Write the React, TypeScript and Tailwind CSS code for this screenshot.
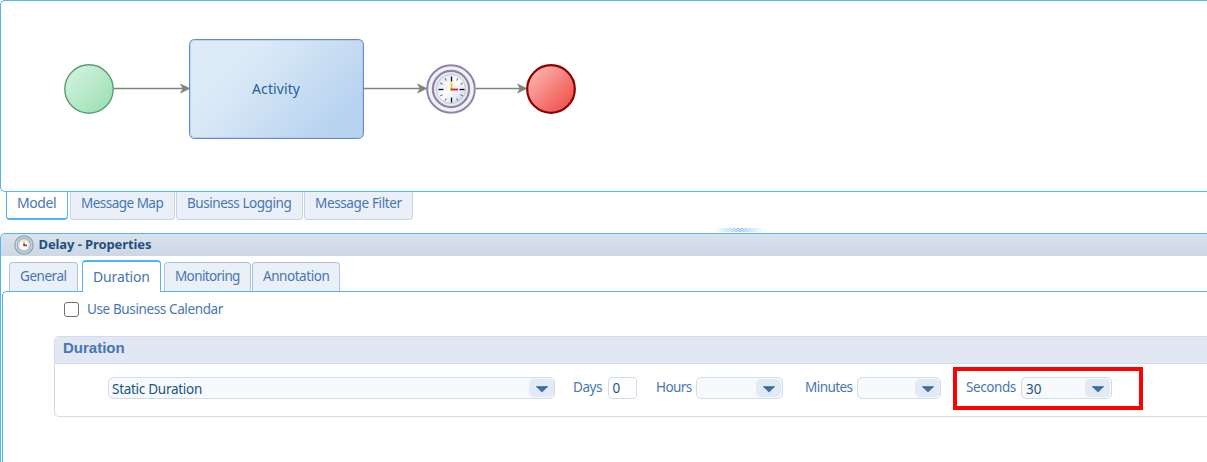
import React from "react";

function Clock() {
  const ticks = Array.from({ length: 12 }, (_, i) => i * 30);
  return (
    <g transform="translate(451 89)">
      <circle r="23.8" fill="#f1f0f3" stroke="#8d85ac" strokeWidth="2" />
      <circle r="18.1" fill="#e9e8ef" stroke="#8d85ac" strokeWidth="2.2" />
      <circle r="14.6" fill="url(#clockFace)" stroke="#b5ccd8" strokeWidth="1" />
      {ticks.map((a) => (
        <line
          key={a}
          y1={-13}
          y2={a % 90 === 0 ? -8 : -10.3}
          stroke={a % 90 === 0 ? "#111" : "#66727c"}
          strokeWidth={a % 90 === 0 ? 1.3 : 1}
          transform={`translate(0.5 0.5) rotate(${a})`}
        />
      ))}
      <path d="M0.5 1V-6.5" stroke="#f6c400" strokeWidth="1.8" />
      <path d="M0 0.5H7" stroke="#f01818" strokeWidth="1.8" />
      <rect x="-0.5" y="-0.5" width="2" height="2" fill="#b46a10" />
    </g>
  );
}

function Arrow({ from, to }: { from: number; to: number }) {
  return (
    <g>
      <path d={`M${from} 88.5H${to - 3}`} stroke="#7d8678" strokeWidth="1.3" />
      <path d={`M${to} 88.5L${to - 9.5} 84L${to - 7} 88.5L${to - 9.5} 93Z`} fill="#7d8678" stroke="#7d8678" strokeWidth="0.6" />
    </g>
  );
}

function Diagram() {
  return (
    <svg className="block" width="1206" height="190" viewBox="1 1 1206 190">
      <defs>
        <linearGradient id="start" x1="0" y1="0" x2="1" y2="1">
          <stop offset="0.1" stopColor="#d3f1de" />
          <stop offset="0.9" stopColor="#9de0b4" />
        </linearGradient>
        <linearGradient id="end" x1="0" y1="0" x2="1" y2="1">
          <stop offset="0.1" stopColor="#fbb4b0" />
          <stop offset="0.9" stopColor="#f0504a" />
        </linearGradient>
        <linearGradient id="activity" gradientUnits="userSpaceOnUse" x1="210" y1="30" x2="325" y2="135">
          <stop offset="0" stopColor="#deeaf7" />
          <stop offset="0.3" stopColor="#dceaf7" />
          <stop offset="1" stopColor="#b8d3f0" />
        </linearGradient>
        <linearGradient id="clockFace" x1="0" y1="0" x2="1" y2="1">
          <stop offset="0.1" stopColor="#d9e4f2" />
          <stop offset="0.5" stopColor="#fff" />
          <stop offset="1" stopColor="#c3d0e8" />
        </linearGradient>
      </defs>
      <Arrow from={114} to={190} />
      <Arrow from={364} to={427} />
      <Arrow from={476} to={527} />
      <circle cx="89" cy="89" r="24.2" fill="url(#start)" stroke="#579e78" strokeWidth="1.4" />
      <rect x="189.5" y="39.5" width="174" height="99" rx="5" fill="url(#activity)" stroke="#6688c8" />
      <rect x="190.5" y="40.5" width="172" height="97" rx="4" fill="none" stroke="#a9c3e8" strokeOpacity="0.6" />
      <text x="252" y="94" textLength="48" className="font-['Noto_Sans',sans-serif] text-[14px]" fill="#1f5fa0">
        Activity
      </text>
      <Clock />
      <circle cx="551" cy="89" r="23.8" fill="url(#end)" stroke="#8c0000" strokeWidth="2.2" />
    </svg>
  );
}

function SelectBox({ value = "", className }: { value?: string; className: string }) {
  return (
    <div className={`flex h-[22px] items-center justify-between rounded-[5px] border border-[#cfdceb] bg-[#f7f9fc] text-[#185684] ${className}`}>
      <span className="relative top-px whitespace-nowrap leading-[20px]">{value}</span>
      <span className="flex h-[18px] w-[25px] items-center justify-center rounded-[5px] bg-[#e2ebf5]">
        <svg width="12" height="7" viewBox="0 0 12 7" className="relative top-px">
          <path d="M0 0.5H12L6 6.5Z" fill="#3b72ab" />
          <path d="M0 0.5H12L11 1.5H1Z" fill="#285b91" />
        </svg>
      </span>
    </div>
  );
}

function HeaderClock() {
  return (
    <svg width="20" height="20" viewBox="0 0 20 20" className="ml-[13px] shrink-0">
      <circle cx="10" cy="10" r="9.2" fill="#cbd6df" stroke="#8ea5b8" strokeWidth="1.3" />
      <circle cx="10" cy="10" r="6.6" fill="#dfe5ea" stroke="#a4b3c0" strokeWidth="1.3" />
      <circle cx="10" cy="10" r="4.7" fill="#fff" stroke="#d5dde4" strokeWidth="0.7" />
      <path d="M10 6.5V10" stroke="#d59b22" strokeWidth="1.3" />
      <path d="M9.3 10.4H13" stroke="#e01818" strokeWidth="1.6" />
      <path d="M9.5 9.7H10.7" stroke="#513010" strokeWidth="1.3" />
    </svg>
  );
}

function SplitterGrip() {
  return (
    <svg width="50" height="4" viewBox="0 0 50 4" className="ml-[715px] block">
      {Array.from({ length: 48 }, (_, i) => {
        const level = 1 - Math.abs(i - 24) / 25;
        return [0, 1, 2, 3].map((r) => (
          <rect key={`${i}-${r}`} x={i} y={r} width="1" height="1" fill="#87b9f4" fillOpacity={level * ((Math.floor(i / 2) + r) % 2 ? 0.85 : 0.4)} />
        ));
      })}
    </svg>
  );
}

const modelTab = "h-7 rounded-b-[4px] border border-t-0 border-[#c5d5e8] bg-[#ebf0f8] pl-[10px] pt-px leading-[20px]";
const propertyTab = "h-[29px] rounded-t-[4px] border border-b-0 border-[#b0c4de] bg-[#ebf0f8] pl-[10px] pt-[3px] leading-[20px]";

export default function App() {
  return (
    <div className="flex h-[462px] w-[1207px] flex-col overflow-hidden bg-white font-['Noto_Sans',sans-serif] text-[13.5px] text-[#4676b4]">
      <section className="h-48 shrink-0 rounded-l-[5px] border border-r-0 border-[#54b6ee]">
        <Diagram />
      </section>

      <nav className="flex h-[36px] shrink-0 whitespace-nowrap pl-[6px]">
        <div className="mr-[2px] h-7 w-[62px] rounded-b-[4px] border border-t-0 border-b-2 border-[#4db5f3] pl-[10px] text-[14px] leading-[21px] tracking-[-0.4px]">Model</div>
        <div className={`${modelTab} mr-px w-[105px] tracking-[-0.52px]`}>Message Map</div>
        <div className={`${modelTab} mr-px w-[127px] tracking-[-0.45px]`}>Business Logging</div>
        <div className={`${modelTab} w-[109px] tracking-[-0.36px]`}>Message Filter</div>
      </nav>
      <div className="h-[5px] shrink-0">
        <SplitterGrip />
      </div>

      <section className="flex flex-1 flex-col rounded-tl-[5px] border-t border-l border-[#54b6ee]">
        <header className="flex h-[22px] shrink-0 items-center rounded-tl-[4px] bg-linear-to-b from-[#d9e3ee] to-[#ced8e4] text-[13px] font-bold text-[#1f5080]">
          <HeaderClock />
          <span className="ml-[4.5px] whitespace-nowrap tracking-[-0.1px]">Delay - Properties</span>
        </header>

        <nav className="z-10 flex h-[36px] shrink-0 items-end whitespace-nowrap pl-2">
          <div className={`${propertyTab} mr-1 mb-px w-[69px] tracking-[-0.45px]`}>General</div>
          <div className="h-8 w-[79px] rounded-t-[4px] border border-t-2 border-b-0 border-[#4db5f3] bg-white pl-[10px] pt-[5px] text-[14px] leading-[20px] tracking-[-0.15px]">Duration</div>
          <div className={`${propertyTab} mr-px mb-px ml-[3px] w-[87px] tracking-[-0.62px]`}>Monitoring</div>
          <div className={`${propertyTab} mb-px w-[88px] tracking-[-0.45px]`}>Annotation</div>
        </nav>

        <div className="-mt-px ml-px flex-1 rounded-tl-[5px] border-t border-l border-[#4db5f3] pt-[9px]">
          <label className="ml-[61px] flex h-[18px] items-center">
            <span className="relative -top-px size-[15px] rounded-[3px] border border-[#707070] bg-white" />
            <span className="relative -top-px ml-2 whitespace-nowrap tracking-[-0.38px]">Use Business Calendar</span>
          </label>

          <section className="mt-[17px] ml-[51px] h-[81px] rounded-l-[5px] border border-r-0 border-[#cfdceb]">
            <h2 className="h-[27px] rounded-tl-[4px] border-b border-[#cfdceb] bg-[#e1e7f3] pl-2 font-['Liberation_Sans',sans-serif] text-[15px] leading-[22px] font-bold">Duration</h2>
            <div className="flex h-[52px] items-start pt-[9px] pl-[53px]">
              <div className="flex pt-[4px]">
                <SelectBox value="Static Duration" className="w-[447px] pl-[3px] tracking-[-0.28px]" />
                <span className="ml-[18px] w-[35px] leading-[20px] tracking-[-0.45px]">Days</span>
                <span className="h-[22px] w-[29px] rounded-[4px] border border-[#cfdceb] pl-[3.5px] leading-[21px] text-[#185684]">0</span>
                <span className="ml-[19px] w-10 leading-[20px] tracking-[-0.6px]">Hours</span>
                <SelectBox className="w-[87px] pr-px" />
                <span className="ml-[22px] w-[52px] leading-[20px] tracking-[-0.55px]">Minutes</span>
                <SelectBox className="w-[84px]" />
              </div>
              <div className="relative -top-[6px] ml-3 flex h-[43px] w-[190px] border-4 border-[#fe0000] pt-[6px] pl-[9px]">
                <span className="w-[55px] leading-[20px] tracking-[-0.42px]">Seconds</span>
                <SelectBox value="30" className="w-[91px] pr-px pl-[4px]" />
              </div>
            </div>
          </section>
        </div>
      </section>
    </div>
  );
}
